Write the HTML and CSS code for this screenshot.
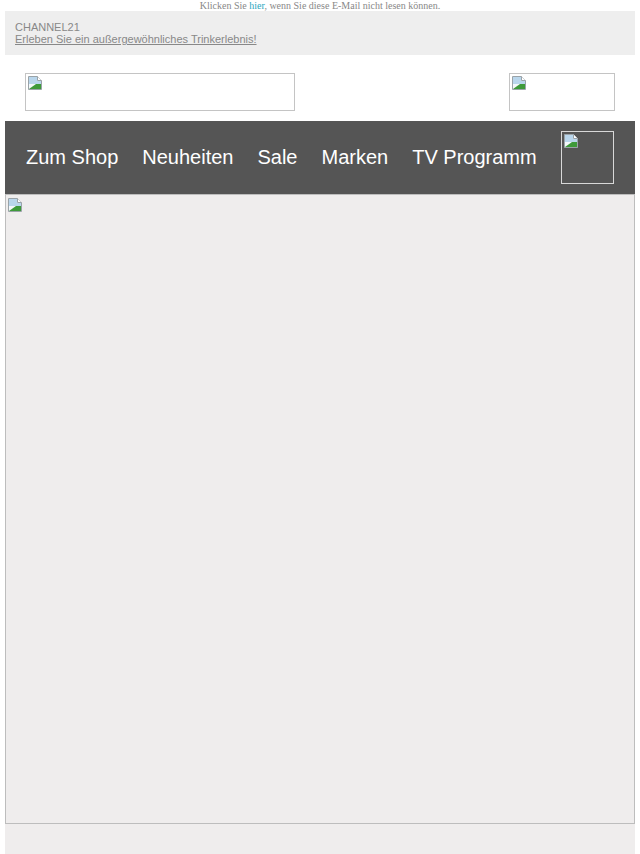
FILE: index.html
```html
<!DOCTYPE html>
<html>
<head>
    <meta charset="UTF-8">
    <meta name="viewport" content="width=device-width, initial-scale=1.0">
    <title>CHANNEL21</title>
    <link rel="stylesheet" href="styles.css">
</head>
<body>
    <div class="mail">
        <p class="preheader">Klicken Sie <a href="#">hier</a>, wenn Sie diese E-Mail nicht lesen können.</p>

        <div class="intro">
            <div class="brand">CHANNEL21</div>
            <a class="tagline" href="#">Erleben Sie ein außergewöhnliches Trinkerlebnis!</a>
        </div>

        <div class="logos">
            <div class="pic logo-left">
                <svg class="broken" viewBox="0 0 16 16"><path d="M1.5 1.5h9l4 4v9h-13z" fill="#f4f8fb" stroke="#9aa3a8"/><path d="M2 2h8v4h4v3H2z" fill="#b9d6ec"/><path d="M2 14l7-5h5v5z" fill="#3e9a3a"/><path d="M10.5 1.5v4h4" fill="#fff" stroke="#9aa3a8"/></svg>
            </div>
            <div class="pic logo-right">
                <svg class="broken" viewBox="0 0 16 16"><path d="M1.5 1.5h9l4 4v9h-13z" fill="#f4f8fb" stroke="#9aa3a8"/><path d="M2 2h8v4h4v3H2z" fill="#b9d6ec"/><path d="M2 14l7-5h5v5z" fill="#3e9a3a"/><path d="M10.5 1.5v4h4" fill="#fff" stroke="#9aa3a8"/></svg>
            </div>
        </div>

        <div class="nav">
            <a href="#">Zum Shop</a>
            <a href="#">Neuheiten</a>
            <a href="#">Sale</a>
            <a href="#">Marken</a>
            <a href="#">TV Programm</a>
            <div class="pic nav-pic">
                <svg class="broken" viewBox="0 0 16 16"><path d="M1.5 1.5h9l4 4v9h-13z" fill="#f4f8fb" stroke="#9aa3a8"/><path d="M2 2h8v4h4v3H2z" fill="#b9d6ec"/><path d="M2 14l7-5h5v5z" fill="#3e9a3a"/><path d="M10.5 1.5v4h4" fill="#fff" stroke="#9aa3a8"/></svg>
            </div>
        </div>

        <div class="hero">
            <svg class="broken" viewBox="0 0 16 16"><path d="M1.5 1.5h9l4 4v9h-13z" fill="#f4f8fb" stroke="#9aa3a8"/><path d="M2 2h8v4h4v3H2z" fill="#b9d6ec"/><path d="M2 14l7-5h5v5z" fill="#3e9a3a"/><path d="M10.5 1.5v4h4" fill="#fff" stroke="#9aa3a8"/></svg>
        </div>

        <div class="footer"></div>
    </div>
</body>
</html>
```

FILE: styles.css
```css
* {
    padding: 0;
    margin: 0;
    box-sizing: border-box;
}
body {
    background: #fff;
    font-family: "Liberation Sans", Arial, sans-serif;
}
.mail {
    width: 630px;
    margin: 0 auto;
}
.preheader {
    font-family: "Liberation Serif", "Times New Roman", serif;
    font-size: 10px;
    line-height: 11px;
    color: #888;
    text-align: center;
}
.preheader a {
    color: #2aa7c0;
    text-decoration: none;
}
.intro {
    background: #eeeeee;
    padding: 10px 10px;
    height: 44px;
    font-size: 11px;
    line-height: 12px;
    color: #888;
}
.tagline {
    color: #888;
    text-decoration: underline;
}
.logos {
    display: flex;
    justify-content: space-between;
    padding: 18px 20px 10px 20px;
    height: 66px;
}
.pic {
    border: 1px solid #c4c4c4;
    padding: 1px;
}
.logo-left {
    width: 270px;
    height: 38px;
}
.logo-right {
    width: 106px;
    height: 38px;
}
.broken {
    display: block;
    width: 16px;
    height: 16px;
}
.nav {
    display: flex;
    align-items: center;
    gap: 24px;
    background: #555555;
    height: 73px;
    padding: 0 21px;
}
.nav a {
    color: #fff;
    font-size: 20px;
    text-decoration: none;
}
.nav-pic {
    width: 53px;
    height: 53px;
    border-color: #d8d8d8;
}
.hero {
    height: 630px;
    background: #efeded;
    border: 1px solid #bdbdbd;
    padding: 2px 1px;
}
.footer {
    height: 30px;
    background: #efeded;
}
```
